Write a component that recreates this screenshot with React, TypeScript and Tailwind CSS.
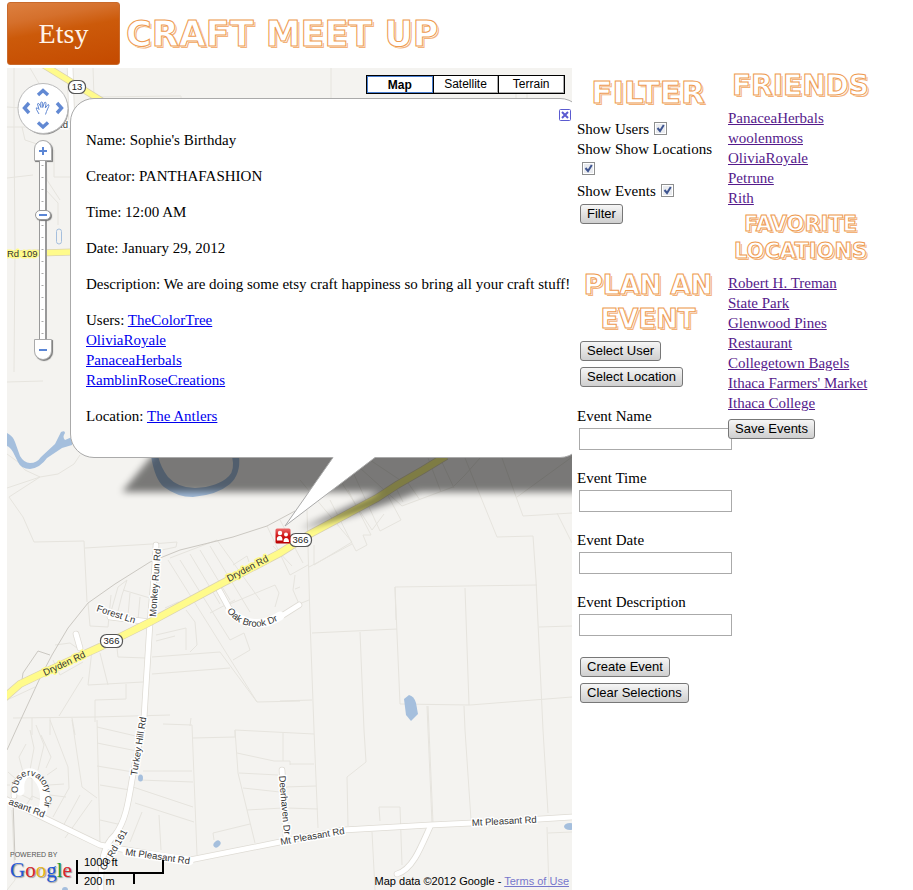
import React, { useState } from "react";

const parcels = [
  "M14 68V127L15 250L14 372M7 127H70M7 178L33 175M46 150L47 180L60 200M54 150V177H70M46 190L58 203V225M7 382L43 381M93 68L94 97M90 97L181 96V100M331 68V98M30 68L44 92M516 93V100M527 93V98M7 107L22 108M22 127L25 140L40 145",
  "M7 454L18 462L25 470L40 477M80 455L74 464L58 474L40 477L7 488M40 477L9 497L23 517L34 542L84 541L87 602M85 548L152 544L177 542L176 547L157 551",
  "M307 510L310 620L314 730L318 828M465 458L497 537L533 536L536 580L543 730L548 813M502 458L523 516L572 513M557 513L572 543M517 497L572 457M396 620L395 587L537 585M465 588L469 705M395 587L400 704L470 705L572 697M312 633L397 629M360 632L364 730L366 762L347 777L348 826",
  "M428 706L429 730L433 823M427 706L428 730L432 823M464 706L465 730L471 820M280 701L312 700M539 627L572 626M380 821L379 807L400 807L402 865M372 832L375 890M547 827L549 890M548 833L572 832M235 730L314 734M285 787L316 786M287 808L318 809M290 764L314 764",
  "M97 720L100 843M97 727L140 737M97 743L137 751M97 766L133 772M100 785L130 790M100 820L122 825M163 724L192 725L197 855M193 738L235 737V730L238 773L255 843M237 753L274 761H290V765M239 773L278 775M243 788L280 792M247 810L283 808M214 840L213 833L250 824M140 780L193 782M143 771H192M133 787L193 807M135 803L194 822M142 812L130 842M159 815L161 850M283 733V761",
  "M50 720L68 767L69 788L53 817M72 720L82 787L97 798M92 800L65 838M46 768L51 757L41 735M38 770L44 745L36 725M30 770L34 748L30 730M23 772L19 757L26 744M17 780L8 772M10 785H7M47 775L57 768M49 785L64 784M50 795L66 797M80 795L62 828M12 810L15 880L7 890M32 776L32 800L18 793M23 810L32 796L44 801",
  "M88 603L90 626L108 627L111 595M110 615L118 587L127 580L122 595L117 615M123 590L150 598M128 615L130 593M138 620L140 597M88 685L143 682M88 685L92 650M100 653L108 685M117 648L118 657L146 658M152 657L220 652L257 702L300 701M152 674L230 668M168 560L257 702M95 722V700L126 699V684M83 677L59 716M13 718L95 717L170 715M190 726L191 718M53 660L60 675L83 662M7 700L35 687M32 718V735M50 718V735M72 718L75 735M55 645L70 643L80 650",
  "M180 560L230 640L244 633M190 554L220 604M200 550L230 600M210 546L250 612M217 540L260 600M170 558L217 540M233 565L247 556L249 562M225 606L275 585L279 593L275 607M210 613L235 600M165 608L178 602L190 605M156 635L186 628V650M156 641L175 636M186 610L195 622L197 645L190 652M244 633L250 650L233 660M295 589L300 587M267 526L290 575L308 565M280 520L303 563M314 545V565L352 542L300 480M309 567L352 544M330 500L356 551L367 545L363 535L371 535L348 490M340 480L372 530L384 514M352 470L380 531L401 520L386 492M360 468L402 506L453 487L465 475L480 458M428 458L441 492M440 458L454 488M406 480L420 500M370 460L400 480M397 490L403 502M273 546L292 566M295 575L293 590L299 604L309 600",
];

const whiteRoads = [
  "M70 66L72 126M24 108C25 130 40 128 72 125",
  "M156 545C155 570 152 600 150 622L144 718L132 780C128 805 125 822 115 835C104 845 100 860 101 892",
  "M5 799L38 815L100 845C125 850 150 854 190 860L280 842L343 830L430 825L472 823L574 817",
  "M430 827C425 838 420 850 415 858C410 866 404 872 397 874",
  "M14 796C13 778 24 774 31 775C43 777 52 793 41 815",
  "M282 770L286 838",
  "M218 588L230 610C240 625 262 629 280 617L299 605",
  "M110 617L150 622",
  "M76 634L80 648",
];

const dryden =
  "M4 698L20 684L43 673L100 647L150 622L217 586L280 553L310 534L377 498L397 485L423 470L446 456";

function Shield({ x, y, w, label }: { x: number; y: number; w: number; label: string }) {
  return (
    <g>
      <rect x={x - w / 2} y={y - 6.5} width={w} height={13} rx={6} fill="#fff" stroke="#555" strokeWidth={1.2} />
      <text x={x} y={y + 3.3} textAnchor="middle" fontSize={9.5} fill="#222">{label}</text>
    </g>
  );
}

function MapDrawing() {
  return (
    <svg className="block h-full w-full" viewBox="7 68 565 822" preserveAspectRatio="xMinYMin slice" fontFamily="'Liberation Sans', Arial, sans-serif" role="img" aria-label="Map">
      <defs>
        <filter id="soft" x="-10%" y="-30%" width="120%" height="160%"><feGaussianBlur stdDeviation="3.5" /></filter>
        <linearGradient id="red" x1="0" y1="0" x2="0" y2="1"><stop offset="0" stopColor="#ee6a6a" /><stop offset=".5" stopColor="#d01515" /><stop offset="1" stopColor="#b80000" /></linearGradient>
        <path id="cir" d="M18 793C16 776 30 771 39 780C49 790 45 803 41 818" />
        <path id="oak" d="M227 611C238 628 262 634 288 614" />
        <path id="mt2" d="M125 855L195 865" />
      </defs>
      <rect x="7" y="68" width="565" height="822" fill="#f4f3f0" />
      <g fill="none" stroke="#e6e4de">{parcels.map((d) => <path key={d} d={d} />)}</g>
      <g fill="#a5bfdd">
        <path d="M7 433Q13 436 15 442L20 456Q24 463 30 463Q37 463 41 457L55 444L61 432Q65 430 65 433Q62 437 65 440L72 437V445L62 448L47 458Q40 468 30 469Q21 469 18 462L13 452Q10 447 7 446Z" />
        <path d="M151 456Q155 480 164 487Q177 497 193 497Q217 495 230 484Q241 474 239 456H232Q235 470 229 476Q218 487 195 488Q178 488 168 477Q161 468 158 456Z" />
        <path d="M404 699L409 695Q414 696 416 703L418 714L411 721L406 715Z" />
        <ellipse cx="140.500" cy="778" rx="2.500" ry="3.500" /><ellipse cx="217" cy="844" rx="4" ry="3" transform="rotate(-45 217 844)" /><circle cx="65" cy="890" r="3" /><ellipse cx="570" cy="826.500" rx="6" ry="3.500" />
      </g>
      <rect x="56.500" y="229" width="5" height="15" rx="2.500" fill="none" stroke="#a5bfdd" />
      <path d="M16 730L40 678L52 655L68 628L88 603L115 584L150 562L180 550L233 537L267 526L295 511M22 680L23 673L38 651L50 655M16 730L7 750M13 800L15 860" fill="none" stroke="#cbc8c2" />
      <g fill="none" stroke="#dedbd4" strokeWidth="6.500" strokeLinecap="round">{whiteRoads.map((d) => <path key={d} d={d} />)}</g>
      <g fill="none" stroke="#fff" strokeWidth="5" strokeLinecap="round">{whiteRoads.map((d) => <path key={d} d={d} />)}</g>
      <g fill="none">
        <path d={dryden} stroke="#dbd3b0" strokeWidth="8" /><path d={dryden} stroke="#fffb8b" strokeWidth="6.500" />
        <path d="M42 64L102 101M7 254L72 252" stroke="#dbd3b0" strokeWidth="7" /><path d="M42 64L102 101M7 254L72 252" stroke="#fffb8b" strokeWidth="5.500" />
      </g>
      <path d="M20 791C18 774 30 768 37 777C46 787 46 800 42 812M230 611C242 624 260 629 280 616M127 852L189 861" fill="none" stroke="#fff" strokeWidth="9" strokeLinecap="round" />
      <g fontSize="9.500" fill="#333" stroke="#fff" strokeWidth="3" paintOrder="stroke" strokeLinejoin="round">
        <text x="56" y="128">Rd</text>
        <g stroke="#fffb8b">
          <text x="7" y="257">Rd 109</text>
          <text transform="translate(229 582) rotate(-28)">Dryden Rd</text>
          <text transform="translate(45 676) rotate(-25)">Dryden Rd</text>
        </g>
        <text transform="translate(156 617) rotate(-86)">Monkey Run Rd</text>
        <text transform="translate(96 611) rotate(18)">Forest Ln</text>
        <text transform="translate(137 776) rotate(-81)">Turkey Hill Rd</text>
        <text transform="translate(8 804) rotate(21)">asant Rd</text>
        <text transform="translate(105 871) rotate(-60)">Co Rd 161</text>
        <text transform="translate(279 776) rotate(85)">Deerhaven Dr</text>
        <text transform="translate(281 845) rotate(-10)">Mt Pleasant Rd</text>
        <text transform="translate(472 826) rotate(-3)">Mt Pleasant Rd</text>
        <g stroke="none">
          <text><textPath href="#mt2">Mt Pleasant Rd</textPath></text>
          <text><textPath href="#oak">Oak Brook Dr</textPath></text>
          <text fontSize="9"><textPath href="#cir">Observatory Cir</textPath></text>
        </g>
      </g>
      <Shield x={77} y={87} w={17} label="13" />
      <Shield x={111.500} y={641} w={22} label="366" />
      <path d="M165 440L122 492H380L300 529Q350 518 420 492H590V440Z" opacity=".5" filter="url(#soft)" />
      <Shield x={300.500} y={540} w={22} label="366" />
      <g>
        <rect x="275.500" y="528.500" width="15" height="15" rx="1.500" fill="url(#red)" />
        <g fill="#fff"><circle cx="280" cy="533" r="2.200" /><path d="M277 540.500Q276 536 280 536Q282.500 536 282.500 540.500Z" /><circle cx="286" cy="534.500" r="2" /><path d="M283.500 542Q283.500 538 286 538Q289 538 289 542Z" /></g>
      </g>
    </svg>
  );
}

function MapControls() {
  const [zoom, setZoom] = useState(12);
  return (
    <div className="absolute left-2.5 top-2.5 flex w-[52px] flex-col items-center">
      <button aria-label="Pan map" className="block h-[62px]">
        <svg width="52" height="53" viewBox="0 0 52 53" fill="none">
          <circle cx="27" cy="27" r="24.500" fill="#777" opacity=".8" />
          <circle cx="26" cy="25.500" r="25" fill="#fff" stroke="#bbb" />
          <g stroke="#6289d3" strokeWidth="3.400"><path d="M21 12L26 7.500L31 12" /><path d="M21 39.500L26 44L31 39.500" /><path d="M12 20L7.500 25L12 30" /><path d="M40 20L44.500 25L40 30" /></g>
          <path d="M22 31L19.500 26.500Q18.500 24 20.500 25L22 26.500L20.500 21Q21 19.500 22.300 21L24 24.500L23.700 19.500Q25 18 25.700 20V24.500L27.500 19.500Q29 18.500 29 20.500L28.300 25L31 21.500Q32.600 21.500 31.700 23.500L29.500 28.500L28.500 31.500" stroke="#6289d3" />
        </svg>
      </button>
      <button aria-label="Zoom in" onClick={() => setZoom(Math.min(17, zoom + 1))} className="flex h-[21px] w-[18px] items-center justify-center rounded-t-[9px] border border-[#aaa] bg-white shadow-[1px_1px_1px_#777]">
        <svg width="8" height="8" viewBox="0 0 8 8" stroke="#5b86d5" strokeWidth="2"><path d="M4 0V8M0 4H8" /></svg>
      </button>
      <div className="grid h-[178px] place-items-center">
        <svg className="col-start-1 row-start-1" width="8" height="178" viewBox="0 0 8 178">
          <rect width="8" height="178" fill="#999" /><rect x="1" width="5" height="178" fill="#fff" />
          <path d="M3.500 4V178" stroke="#aaa" strokeWidth="2" strokeDasharray="1 11" />
        </svg>
        <input type="range" aria-label="Zoom level" min={0} max={17} value={zoom} onChange={(e) => setZoom(Number(e.target.value))} className="z-10 col-start-1 row-start-1 h-[178px] w-4 appearance-none bg-transparent [direction:rtl] [writing-mode:vertical-lr] [&::-webkit-slider-thumb]:h-2.5 [&::-webkit-slider-thumb]:w-4 [&::-webkit-slider-thumb]:appearance-none [&::-webkit-slider-thumb]:rounded-[5px] [&::-webkit-slider-thumb]:border [&::-webkit-slider-thumb]:border-[#999] [&::-webkit-slider-thumb]:bg-[linear-gradient(#5b86d5,#5b86d5)] [&::-webkit-slider-thumb]:bg-[length:8px_2px] [&::-webkit-slider-thumb]:bg-center [&::-webkit-slider-thumb]:bg-no-repeat [&::-webkit-slider-thumb]:bg-white [&::-webkit-slider-thumb]:shadow-[1px_1px_1px_#777]" />
      </div>
      <button aria-label="Zoom out" onClick={() => setZoom(Math.max(0, zoom - 1))} className="flex h-[21px] w-[18px] items-center justify-center rounded-b-[9px] border border-[#aaa] bg-white shadow-[1px_1px_1px_#777]">
        <span className="h-0.5 w-2 bg-[#5b86d5]" />
      </button>
    </div>
  );
}

function MapTypes() {
  return (
    <div className="absolute right-[7px] top-[7px] flex w-[199px] border border-black bg-black font-['Liberation_Sans',Arial,sans-serif] text-xs leading-[17px] text-black">
      <button className="h-[17px] flex-1 border border-[#4a7fd0] bg-white font-bold">Map</button>
      <button className="ml-px h-[17px] flex-1 border-b border-r border-[#aaa] bg-white">Satellite</button>
      <button className="ml-px h-[17px] flex-1 border-b border-r border-[#aaa] bg-white">Terrain</button>
    </div>
  );
}

const popupLink = "text-[#0000ee] underline";

function Popup() {
  return (
    <section className="absolute left-[63px] top-[30px] h-[360px] w-[514px] rounded-[24px] border border-[#aaa] bg-white px-[15px] pt-[31px]">
      <div className="flex flex-col gap-4 whitespace-nowrap">
        <p>Name: Sophie's Birthday</p>
        <p>Creator: PANTHAFASHION</p>
        <p>Time: 12:00 AM</p>
        <p>Date: January 29, 2012</p>
        <p>Description: We are doing some etsy craft happiness so bring all your craft stuff!</p>
        <p>
          Users: <a href="#" className={popupLink}>TheColorTree</a><br />
          <a href="#" className={popupLink}>OliviaRoyale</a><br />
          <a href="#" className={popupLink}>PanaceaHerbals</a><br />
          <a href="#" className={popupLink}>RamblinRoseCreations</a>
        </p>
        <p>Location: <a href="#" className={popupLink}>The Antlers</a></p>
      </div>
      <button aria-label="Close" className="absolute right-3 top-2.5">
        <svg width="12" height="12" viewBox="0 0 12 12" fill="#fff" stroke="#5b5bd0"><rect x=".5" y=".5" width="11" height="11" rx="1" /><path d="M3 3L9 9M9 3L3 9" strokeWidth="2" /></svg>
      </button>
      <svg className="absolute left-[213px] top-[357px]" width="93" height="72" viewBox="0 0 93 72">
        <path d="M49 0V1.500L1 70L91 1.500V0Z" fill="#fff" /><path d="M49 1.500L1 70L91 1.500" fill="none" stroke="#aaa" />
      </svg>
    </section>
  );
}

function MapFooter() {
  return (
    <div className="pointer-events-none absolute inset-x-0 bottom-0 flex items-end justify-between font-['Liberation_Sans',Arial,sans-serif]">
      <div className="flex items-end">
        <div className="w-[69px] pl-[3px]">
          <div className="whitespace-nowrap text-[7px] leading-[8px] text-[#555]">POWERED BY</div>
          <div className="pb-2 font-['Liberation_Serif',serif] text-[21px] leading-[23px] [text-shadow:1px_1px_1px_#999]">
            <span className="text-[#2257d6]">G</span><span className="text-[#d8262c]">o</span><span className="text-[#e8b414]">o</span><span className="text-[#2257d6]">g</span><span className="text-[#1c9a38]">l</span><span className="text-[#d8262c]">e</span>
          </div>
        </div>
        <div className="mb-1.5 text-[11px] text-black">
          <div className="h-3.5 w-[88px] border-x-2 border-b-2 border-black pl-1.5 leading-[5px]">1000 ft</div>
          <div className="h-2.5 w-[59px] border-x-2 border-black pl-1.5 pt-px leading-[13px]">200 m</div>
        </div>
      </div>
      <p className="pb-0.5 pr-[3px] text-[11px] leading-[13px] text-black">
        Map data ©2012 Google - <a href="#" className="pointer-events-auto text-[#7777cc] underline">Terms of Use</a>
      </p>
    </div>
  );
}

const outline =
  "font-['DejaVu_Sans',sans-serif] font-bold text-white [-webkit-text-stroke:1px_#ee9a50] [text-shadow:1px_1px_0_#fff,2px_2px_0_#f3b27a]";

const pushButton =
  "h-5 rounded-[3px] border border-[#777] bg-linear-to-b from-[#f6f6f6] to-[#cfcfcf] px-1.5 font-['Liberation_Sans',Arial,sans-serif] text-[13px] leading-[18px] text-black";

function Toggle({ label }: { label: string }) {
  return (
    <label className="block">
      {label}
      <span className="ml-[5px] inline-grid h-[13px] w-[13px] align-[-1px]">
        <input type="checkbox" defaultChecked className="peer col-start-1 row-start-1 h-[13px] w-[13px] appearance-none border border-[#8e8f8f] bg-[#e9ebef] shadow-[inset_0_0_0_1px_#fff]" />
        <svg className="pointer-events-none invisible col-start-1 row-start-1 peer-checked:visible" width="13" height="13" viewBox="0 0 13 13" fill="none" stroke="#3f5590" strokeWidth="2"><path d="M3.500 6L6 9L9.800 3" /></svg>
      </span>
    </label>
  );
}

function Field({ id, label }: { id: string; label: string }) {
  return (
    <div className="pb-[18px]">
      <label htmlFor={id} className="block">{label}</label>
      <input id={id} type="text" className="ml-0.5 mt-0.5 block h-[22px] w-[153px] border border-[#aaa] bg-white px-1" />
    </div>
  );
}

function Links({ items }: { items: string[] }) {
  return (
    <ul>
      {items.map((t) => (
        <li key={t}><a href="#" className="text-[#551a8b] underline">{t}</a></li>
      ))}
    </ul>
  );
}

export default function App() {
  return (
    <div className="overflow-hidden bg-white pl-[7px] font-['Liberation_Serif','Times_New_Roman',serif] text-[15px] leading-5 text-black">
      <header className="flex h-[68px] items-start gap-1.5 pt-0.5">
        <div className="flex h-[63px] w-[113px] items-center justify-center rounded-[3px] border border-[#c96a2c] bg-[linear-gradient(170deg,#dd8040_0%,#d5702c_25%,#cc5a0a_45%,#c44a00_100%)] text-[28px] text-[#fff4ea]">Etsy</div>
        <h1 className={`${outline} whitespace-nowrap pt-2.5 text-[35px] leading-[44px] [-webkit-text-stroke-color:#e8842c]`}>CRAFT MEET UP</h1>
      </header>
      <main className="flex items-start">
        <div className="relative h-[822px] min-w-0 flex-1 overflow-hidden">
          <MapDrawing />
          <MapTypes />
          <Popup />
          <MapControls />
          <MapFooter />
        </div>
        <form className="ml-[5px] w-[151px] shrink-0 pr-[9px]" onSubmit={(e) => e.preventDefault()}>
          <h2 className={`${outline} pb-[7px] pt-1 text-center text-[31px] leading-10`}>FILTER</h2>
          <Toggle label="Show Users" />
          <div className="pb-0.5"><Toggle label="Show Show Locations" /></div>
          <Toggle label="Show Events" />
          <button className={`${pushButton} ml-[3px] mt-[3px] block`}>Filter</button>
          <h2 className={`${outline} pb-[5px] pt-11 text-center text-[26px] leading-[34px]`}>PLAN AN EVENT</h2>
          <div className="flex flex-col items-start gap-1.5 pb-[19px] pl-[3px]">
            <button className={pushButton}>Select User</button>
            <button className={pushButton}>Select Location</button>
          </div>
          <Field id="name" label="Event Name" />
          <Field id="time" label="Event Time" />
          <Field id="date" label="Event Date" />
          <Field id="description" label="Event Description" />
          <div className="flex flex-col items-start gap-1.5 pl-[3px] pt-[3px]">
            <button className={pushButton}>Create Event</button>
            <button className={pushButton}>Clear Selections</button>
          </div>
        </form>
        <aside className="relative mr-10 w-[145px] shrink-0">
          <h2 className={`${outline} pb-1 text-center text-[28px] leading-9`}>FRIENDS</h2>
          <Links items={["PanaceaHerbals", "woolenmoss", "OliviaRoyale", "Petrune", "Rith"]} />
          <h2 className={`${outline} pb-2 pt-[3px] text-center text-[21px] leading-[27px]`}>FAVORITE LOCATIONS</h2>
          <Links items={["Robert H. Treman", "State Park", "Glenwood Pines", "Restaurant", "Collegetown Bagels", "Ithaca Farmers' Market", "Ithaca College"]} />
          <button className={`${pushButton} mt-1.5 block`}>Save Events</button>
        </aside>
      </main>
    </div>
  );
}
